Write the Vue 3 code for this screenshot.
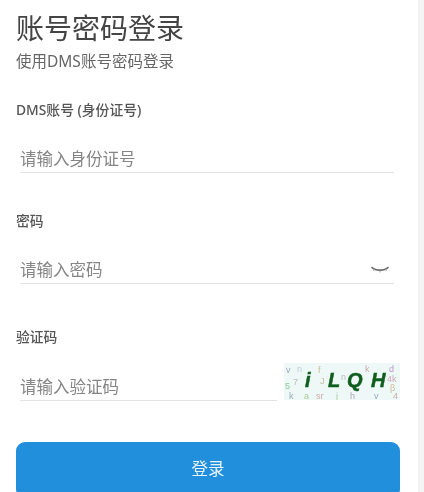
<script setup>
const noise = [
  { t: 'v', x: 2, y: 10, c: '#9ab' }, { t: '5', x: 1, y: 26, c: '#8c9' }, { t: '7', x: 9, y: 22, c: '#bbb' },
  { t: 'k', x: 5, y: 36, c: '#9ab' }, { t: 'n', x: 13, y: 9, c: '#bcd' }, { t: 'a', x: 20, y: 36, c: '#ac9' },
  { t: 'f', x: 34, y: 10, c: '#cb9' }, { t: 'J', x: 36, y: 21, c: '#cb9' }, { t: 'sr', x: 32, y: 36, c: '#caa' },
  { t: 'n', x: 57, y: 17, c: '#bbb' }, { t: 'k', x: 81, y: 9, c: '#caa' }, { t: 'h', x: 66, y: 36, c: '#aab' },
  { t: 'd', x: 105, y: 9, c: '#b9c' }, { t: '4k', x: 103, y: 19, c: '#cab' }, { t: 'β', x: 106, y: 28, c: '#cb9' },
  { t: '4', x: 109, y: 36, c: '#caa' }, { t: 'v', x: 90, y: 36, c: '#9ab' }, { t: 'j', x: 52, y: 36, c: '#ac9' }
]
</script>

<template>
  <div class="page">
    <main class="panel">
      <h1 class="title">账号密码登录</h1>
      <p class="subtitle">使用DMS账号密码登录</p>

      <section class="field">
        <label class="label">DMS账号 (身份证号)</label>
        <div class="input-line spaced">
          <span class="placeholder">请输入身份证号</span>
        </div>
      </section>

      <section class="field second">
        <label class="label">密码</label>
        <div class="input-line spaced">
          <span class="placeholder">请输入密码</span>
          <svg class="eye" width="18" height="8" viewBox="0 0 18 8" fill="none">
            <path d="M1 1.5C4.5 5 13.5 5 17 1.5" stroke="#666" stroke-width="1.6" stroke-linecap="round" />
            <path d="M9 4.4V6.4M3.6 3.4 2.6 4.8M14.4 3.4l1 1.4" stroke="#999" stroke-width="1" />
          </svg>
        </div>
      </section>

      <section class="field third">
        <label class="label">验证码</label>
        <div class="captcha-row">
          <div class="input-line grow">
            <span class="placeholder">请输入验证码</span>
          </div>
          <svg class="captcha" width="116" height="37" viewBox="0 0 116 37">
            <rect width="116" height="37" fill="#eef8f6" />
            <text v-for="(n, i) in noise" :key="i" :x="n.x" :y="n.y" :fill="n.c" class="noise">{{ n.t }}</text>
            <text x="21" y="24" class="code">i</text>
            <text x="44" y="24" class="code">L</text>
            <text x="63" y="24" class="code">Q</text>
            <text x="87" y="24" class="code">H</text>
          </svg>
        </div>
      </section>

      <button class="submit" type="button">登录</button>
    </main>
  </div>
</template>

<style>
html, body { margin: 0; background: #f4f4f4; }
</style>

<style scoped>
.page {
  width: 424px;
  height: 492px;
  overflow: hidden;
  background: #f4f4f4;
  font-family: "Noto Sans", "Noto Sans CJK SC", sans-serif;
  filter: blur(0.4px);
}
.panel {
  width: 418px;
  height: 492px;
  box-sizing: border-box;
  padding: 8px 18px 0 16px;
  background: #fff;
}
.title {
  margin: 0;
  font-size: 28px;
  line-height: 40px;
  font-weight: 400;
  color: #444;
}
.subtitle {
  margin: 2px 0 0;
  font-size: 15.5px;
  line-height: 22px;
  color: #666;
}
.field { margin-top: 29px; }
.field.second { margin-top: 39px; }
.field.third { margin-top: 44px; }
.label {
  display: block;
  font-size: 13.8px;
  line-height: 18px;
  font-weight: 500;
  color: #555;
}
.input-line {
  display: flex;
  align-items: center;
  justify-content: space-between;
  height: 28px;
  margin-left: 4px;
  padding-right: 5px;
  border-bottom: 1px solid #e4e4e4;
}
.input-line.spaced { margin: 25px 6px 0 4px; }
.placeholder {
  font-size: 16.5px;
  color: #858585;
}
.eye { margin-top: 2px; }
.captcha-row {
  display: flex;
  align-items: flex-end;
  gap: 7px;
  margin-top: 17px;
}
.grow { flex: 1; }
.captcha { flex: none; margin-bottom: 1px; }
.noise { font-size: 9px; font-family: "Liberation Sans", sans-serif; }
.code {
  font-family: "Liberation Sans", sans-serif;
  font-size: 20px;
  font-weight: 700;
  font-style: italic;
  fill: #0f5e1e;
  stroke: #0f5e1e;
  stroke-width: 0.5px;
}
.submit {
  display: block;
  width: 384px;
  height: 56px;
  margin-top: 41px;
  border: 0;
  border-radius: 9px;
  background: #228fdd;
  color: #e8f4fc;
  font-family: inherit;
  font-size: 16.5px;
  padding: 0 0 4px;
}
</style>
